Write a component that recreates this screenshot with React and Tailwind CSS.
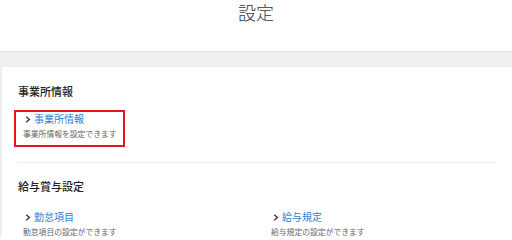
import React from "react";

const font = { fontFamily: '"Noto Sans CJK JP", "Noto Sans", sans-serif' };

function Item({ title, desc, boxed }) {
  return (
    <div
      className={
        boxed
          ? "-ml-[4px] w-[111px] border-2 border-[#e4161b] pl-[7px] pt-[0px] pb-[4px]"
          : "pl-[5px]"
      }
    >
      <div className="flex items-center h-[14px] pl-[2px] gap-[3px]">
        <svg width="6" height="7" viewBox="0 0 6 7" className="shrink-0">
          <path d="M1.2 0.8 L4.4 3.5 L1.2 6.2" fill="none" stroke="#333" strokeWidth="1.3" />
        </svg>
        <span className="text-[10px] leading-[14px] text-[#2a7fd4]">{title}</span>
      </div>
      <div className="mt-[1px] text-[7.8px] leading-[14px] text-[#666]">{desc}</div>
    </div>
  );
}

export default function App() {
  return (
    <div className="w-[512px] h-[237px] overflow-hidden bg-white" style={font}>
      <div className="h-[52px] border-b border-[#e2e2e2] flex justify-center">
        <h1 className="text-[18px] leading-[24px] font-light text-[#333] tracking-[0px]">設定</h1>
      </div>
      <div className="bg-[#efefef] pt-[15px] pl-[2px]">
        <div className="bg-white rounded-tl-[2px] px-[16px] pt-[17px] h-[200px]">
          <h2 className="text-[11px] leading-[14px] text-[#222] font-medium">事業所情報</h2>
          <div className="mt-[12px]">
            <Item title="事業所情報" desc="事業所情報を設定できます" boxed />
          </div>
          <div className="mt-[15px] border-t border-[#ececec] mr-[1px]" />
          <h2 className="mt-[16px] text-[11px] leading-[14px] text-[#222] font-medium">給与賞与設定</h2>
          <div className="mt-[17px] grid grid-cols-[248px_1fr]">
            <Item title="勤怠項目" desc="勤怠項目の設定ができます" />
            <Item title="給与規定" desc="給与規定の設定ができます" />
          </div>
        </div>
      </div>
    </div>
  );
}
